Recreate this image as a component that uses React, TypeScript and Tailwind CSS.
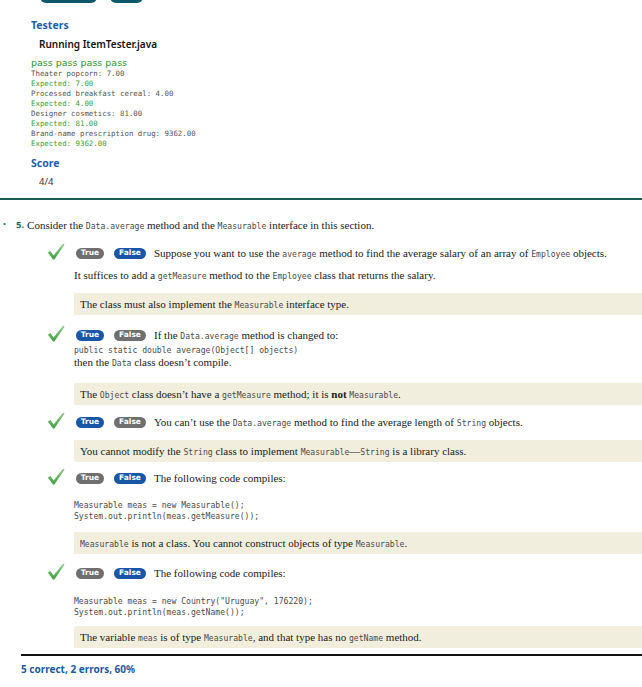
import React from 'react';

const C = ({ children }: { children: React.ReactNode }) => (
  <span className="font-['DejaVu_Sans_Mono',monospace] text-[8.1px] text-[#4a4a4a]">{children}</span>
);

const Check = () => (
  <svg width="18" height="17" viewBox="0 0 18 17" className="shrink-0">
    <defs>
      <linearGradient id="ck" x1="0" y1="0" x2="0" y2="1">
        <stop offset="0" stopColor="#8fd08f" />
        <stop offset="1" stopColor="#3f9f3f" />
      </linearGradient>
    </defs>
    <path d="M0.8 9.6 L3.4 8 L6.6 12.4 L16.2 0.4 L17.6 1.4 L7.4 16.4 L6 16.4 Z" fill="url(#ck)" />
  </svg>
);

const Badges = ({ answer }: { answer: boolean }) => (
  <div className="flex items-center gap-[10px] ml-[2px] mr-[8px] shrink-0">
    <span
      className={`h-[11px] w-[28px] rounded-full flex items-center justify-center text-white font-bold text-[7.5px] leading-none font-['DejaVu_Sans',sans-serif] ${
        answer ? 'bg-[#1a56a8]' : 'bg-[#6f6f6f]'
      }`}
    >
      True
    </span>
    <span
      className={`h-[11px] w-[32px] rounded-full flex items-center justify-center text-white font-bold text-[7.5px] leading-none font-['DejaVu_Sans',sans-serif] ${
        answer ? 'bg-[#6f6f6f]' : 'bg-[#1a56a8]'
      }`}
    >
      False
    </span>
  </div>
);

const Feedback = ({ children, mt }: { children: React.ReactNode; mt: string }) => (
  <div className={`${mt} h-[22px] bg-[#f1eede] flex items-center pl-[6px] text-[11px] text-[#1a1a1a]`}>
    <div className="whitespace-nowrap">{children}</div>
  </div>
);

const Pre = ({ lines, mt }: { lines: string[]; mt: string }) => (
  <div className={`${mt} font-['DejaVu_Sans_Mono',monospace] text-[8.1px] leading-[11px] text-[#4a4a4a] whitespace-pre`}>
    {lines.map((l, i) => (
      <div key={i}>{l}</div>
    ))}
  </div>
);

const Item = ({ mt, children }: { mt: string; children: React.ReactNode }) => (
  <div className={`${mt} flex pl-[47px]`}>
    <div className="w-[27px] shrink-0 -mt-[2px]">
      <Check />
    </div>
    <div className="flex-1">{children}</div>
  </div>
);

const Line = ({ answer, children }: { answer: boolean; children: React.ReactNode }) => (
  <div className="h-[16px] flex items-center text-[11px] text-[#1a1a1a]">
    <Badges answer={answer} />
    <div className="whitespace-nowrap">{children}</div>
  </div>
);

export default function App() {
  const output = [
    ['Theater popcorn: 7.00', 'Expected: 7.00'],
    ['Processed breakfast cereal: 4.00', 'Expected: 4.00'],
    ['Designer cosmetics: 81.00', 'Expected: 81.00'],
    ['Brand-name prescription drug: 9362.00', 'Expected: 9362.00'],
  ];

  return (
    <div className="w-[642px] h-[687px] bg-white overflow-hidden font-['Liberation_Serif',serif] text-[#1a1a1a]">
      {/* cut-off buttons */}
      <div className="h-[3px] overflow-hidden flex items-end gap-[13px] pl-[40px]">
        <div className="w-[57px] h-[16px] shrink-0 rounded-[6px] bg-[#0e5a6c]" />
        <div className="w-[33px] h-[16px] shrink-0 rounded-[6px] bg-[#0e5a6c]" />
      </div>

      <div className="pl-[31px] font-['Noto_Sans',sans-serif]">
        <div className="mt-[15px] h-[14px] leading-[14px] text-[10.5px] font-bold text-[#1e5fa8]">Testers</div>
        <div className="mt-[5px] h-[14px] leading-[14px] pl-[8px] text-[10px] font-semibold text-[#111]">
          Running ItemTester.java
        </div>
        <div className="mt-[6px] h-[12px] leading-[12px] font-['DejaVu_Sans',sans-serif] text-[9.5px] text-[#2e952e]">
          pass pass pass pass
        </div>
        <div className="font-['DejaVu_Sans_Mono',monospace] text-[7.4px] leading-[10px]">
          {output.map(([a, b]) => (
            <React.Fragment key={a}>
              <div className="text-[#555]">{a}</div>
              <div className="text-[#35a035]">{b}</div>
            </React.Fragment>
          ))}
        </div>
        <div className="mt-[7px] h-[14px] leading-[14px] text-[10.5px] font-bold text-[#1e5fa8]">Score</div>
        <div className="mt-[5px] h-[14px] leading-[14px] pl-[8px] text-[9.5px] text-[#333]">4/4</div>
      </div>

      <div className="mt-[9px] h-[2px] bg-[#1b5e55]" />

      {/* question 5 */}
      <div className="mt-[18px] h-[14px] flex items-center text-[11px] whitespace-nowrap">
        <span className="w-[16px] pl-[3px] text-[8px] text-[#1d6b63]">•</span>
        <span className="font-['Noto_Sans',sans-serif] font-bold text-[9.5px] text-[#1d6b63] mr-[3px]">5.</span>
        <span>
          Consider the <C>Data.average</C> method and the <C>Measurable</C> interface in this section.
        </span>
      </div>

      <Item mt="mt-[13px]">
        <Line answer={false}>
          Suppose you want to use the <C>average</C> method to find the average salary of an array of <C>Employee</C>{' '}
          objects.
        </Line>
        <div className="mt-[7px] h-[14px] leading-[14px] text-[11px] whitespace-nowrap">
          It suffices to add a <C>getMeasure</C> method to the <C>Employee</C> class that returns the salary.
        </div>
        <Feedback mt="mt-[11px]">
          The class must also implement the <C>Measurable</C> interface type.
        </Feedback>
      </Item>

      <Item mt="mt-[12px]">
        <Line answer={true}>
          If the <C>Data.average</C> method is changed to:
        </Line>
        <Pre mt="mt-[2px]" lines={['public static double average(Object[] objects)']} />
        <div className="h-[13px] leading-[13px] text-[11px] whitespace-nowrap">
          then the <C>Data</C> class doesn’t compile.
        </div>
        <Feedback mt="mt-[14px]">
          The <C>Object</C> class doesn’t have a <C>getMeasure</C> method; it is <b>not</b> <C>Measurable</C>.
        </Feedback>
      </Item>

      <Item mt="mt-[9px]">
        <Line answer={true}>
          You can’t use the <C>Data.average</C> method to find the average length of <C>String</C> objects.
        </Line>
        <Feedback mt="mt-[10px]">
          You cannot modify the <C>String</C> class to implement <C>Measurable</C>—<C>String</C> is a library class.
        </Feedback>
      </Item>

      <Item mt="mt-[8px]">
        <Line answer={false}>The following code compiles:</Line>
        <Pre
          mt="mt-[14px]"
          lines={['Measurable meas = new Measurable();', 'System.out.println(meas.getMeasure());']}
        />
        <Feedback mt="mt-[10px]">
          <C>Measurable</C> is not a class. You cannot construct objects of type <C>Measurable</C>.
        </Feedback>
      </Item>

      <Item mt="mt-[11px]">
        <Line answer={false}>The following code compiles:</Line>
        <Pre
          mt="mt-[15px]"
          lines={['Measurable meas = new Country("Uruguay", 176220);', 'System.out.println(meas.getName());']}
        />
        <Feedback mt="mt-[8px]">
          The variable <C>meas</C> is of type <C>Measurable</C>, and that type has no <C>getName</C> method.
        </Feedback>
      </Item>

      <div className="ml-[21px] mt-[6px] h-[2px] bg-[#111]" />
      <div className="ml-[21px] mt-[6px] h-[14px] leading-[14px] font-['Noto_Sans',sans-serif] font-bold text-[10px] text-[#1a5aa0]">
        5 correct, 2 errors, 60%
      </div>
    </div>
  );
}
